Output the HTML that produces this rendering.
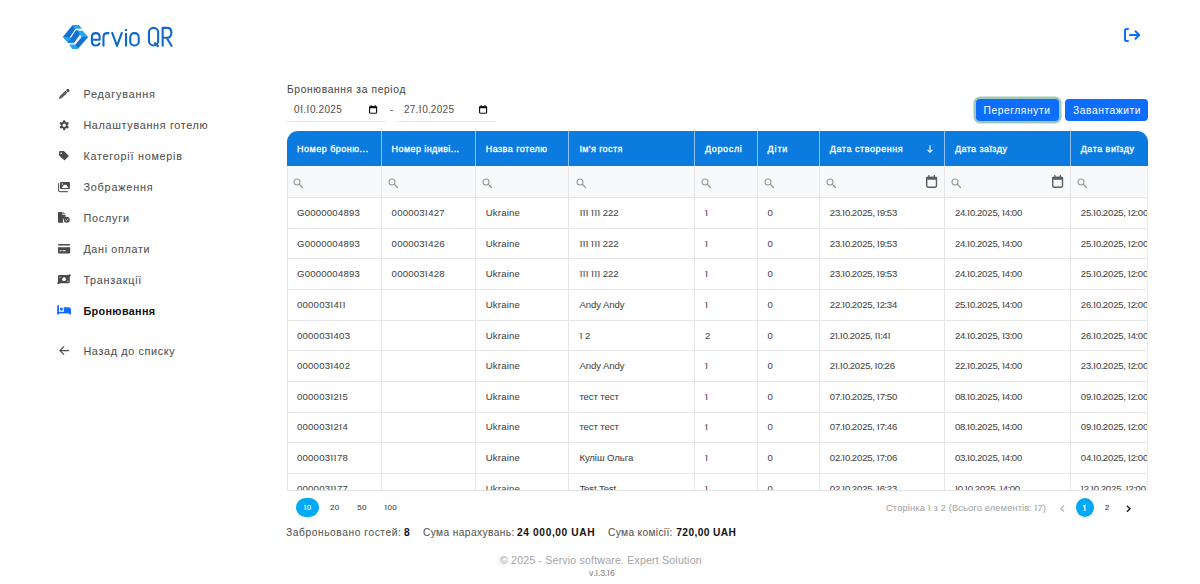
<!DOCTYPE html>
<html><head><meta charset="utf-8">
<style>
*{box-sizing:border-box;margin:0;padding:0}
html,body{width:1200px;height:584px;overflow:hidden;background:#fff;font-family:"Liberation Sans",sans-serif;}
i{font-style:normal}
.o{position:relative;margin:0 0.025em}
.o:before{content:'\00B4';position:absolute;font-size:0.75em;line-height:1;left:-0.1em;top:0.3em;-webkit-text-stroke:0}
.a{position:absolute;white-space:nowrap;line-height:1;-webkit-text-stroke:0.08px currentColor}
.a[style*="bold"]{-webkit-text-stroke:0}
.menu{color:#505050;letter-spacing:0.7px}
.act{color:#111;font-weight:bold;letter-spacing:0.55px}
.ic{position:absolute;overflow:visible}
.lbl{color:#555;letter-spacing:0.8px}
.btn{position:absolute;background:#0d6efd;border-radius:4px}
#tbl{position:absolute;left:286.5px;top:131px;width:861px;height:360px;overflow:hidden;border-radius:11px 11px 0 0}
.hd{position:absolute;left:0;top:0;height:35.2px;width:100%;background:#0c7be0}
.th{color:#fff;font-weight:bold;letter-spacing:0.05px}
.fr{position:absolute;left:0;top:35.2px;height:31.3px;width:100%;background:#f8f9fa}
.hl{position:absolute;left:0;width:100%;height:1px;background:#e6e6e6}
.vl{position:absolute;width:1px;background:#e6e6e6}
.vh{position:absolute;width:1px;top:0;height:35.2px;background:#8fc0f0}
.td{color:#444;letter-spacing:0.2px;-webkit-text-stroke:0.05px currentColor}
</style></head>
<body>
<svg class="ic" style="left:60px;top:22px" width="32" height="30" viewBox="0 0 623 584">
  <polygon fill="#21a7f4" points="245,58 370,58 430,132 300,132"/>
  <polygon fill="#1570d6" points="245,58 300,132 195,292 55,292"/>
  <polygon fill="#21a7f4" points="55,292 195,292 275,402 150,402"/>
  <polygon fill="#1570d6" points="150,402 275,402 430,190 310,155"/>
  <polygon fill="#21a7f4" points="340,168 440,168 550,292 420,292"/>
  <polygon fill="#1570d6" points="420,292 550,292 350,520 235,520"/>
  <polygon fill="#21a7f4" points="180,440 300,440 350,520 235,520"/>
</svg>
<svg class="ic" style="left:85px;top:22px" width="95" height="30" viewBox="85 22 95 30"><g fill="none" stroke="#1267cc" stroke-width="2.1" stroke-linecap="butt" stroke-linejoin="round"><path d="M92 39.7 H99.65 V36.9 Q99.65 33.15 95.8 33.15 Q91.95 33.15 91.95 36.9 V41.7 Q91.95 45.45 95.8 45.45 Q99.2 45.45 99.65 42.6"/><path d="M103.45 46.5 V37 Q103.45 33.15 107.3 33.15 H109.3"/><path d="M111.9 32.1 L117 45.8 L122.1 32.1"/><path d="M126 33 V46.5 M126 29 V31"/><rect x="130.25" y="33.15" width="8.5" height="12.3" rx="4"/><rect x="148.95" y="27.85" width="9.2" height="17.6" rx="4.5"/><path d="M154.3 42.4 L158.6 46.7"/><path d="M162.65 46.5 V27.85 H167.3 Q171.35 27.85 171.35 32.7 Q171.35 37.7 167 37.7 H162.65 M166.6 37.7 L172 46.5"/></g></svg>
<svg class="ic" style="left:1122px;top:26px" width="20" height="18" viewBox="0 0 20 18">
 <g fill="none" stroke="#0d6efd" stroke-width="2" stroke-linecap="round" stroke-linejoin="round">
  <path d="M6 3H4.5A1.5 1.5 0 0 0 3 4.5v9A1.5 1.5 0 0 0 4.5 15H6"/>
  <path d="M8 9h9M13.5 5.3L17.2 9l-3.7 3.7"/>
 </g>
</svg>
<div class="a " style="left:83.40px;top:88.56px;font-size:10.8px;color:#505050;letter-spacing:0.785px;">Редагування</div>
<div class="a " style="left:83.40px;top:119.56px;font-size:10.8px;color:#505050;letter-spacing:0.684px;">Налаштування готелю</div>
<div class="a " style="left:83.40px;top:150.56px;font-size:10.8px;color:#505050;letter-spacing:0.753px;">Категорії номерів</div>
<div class="a " style="left:83.40px;top:181.56px;font-size:10.8px;color:#505050;letter-spacing:0.840px;">Зображення</div>
<div class="a " style="left:83.40px;top:212.56px;font-size:10.8px;color:#505050;letter-spacing:0.793px;">Послуги</div>
<div class="a " style="left:83.40px;top:243.56px;font-size:10.8px;color:#505050;letter-spacing:0.661px;">Дані оплати</div>
<div class="a " style="left:83.40px;top:274.56px;font-size:10.8px;color:#505050;letter-spacing:0.740px;">Транзакції</div>
<div class="a " style="left:83.40px;top:305.56px;font-size:10.8px;color:#111;letter-spacing:0.361px;font-weight:bold;">Бронювання</div>
<div class="a " style="left:83.40px;top:345.56px;font-size:10.8px;color:#505050;letter-spacing:0.658px;">Назад до списку</div>
<svg class="ic" style="left:55px;top:85px" width="18" height="18" viewBox="0 0 18 18"><g transform="rotate(-43 8.8 9.25)"><polygon points="1.9,9.25 4.5,7.9 4.5,10.6" fill="#4a4a4a"/><rect x="4.4" y="7.9" width="8" height="2.7" fill="#4a4a4a"/><rect x="4.9" y="8.95" width="7" height="0.6" fill="#fff" opacity="0.35"/><rect x="12.95" y="7.7" width="2.9" height="3.1" rx="1.2" fill="#4a4a4a"/><circle cx="3.4" cy="9.25" r="0.45" fill="#fff" opacity="0.6"/></g></svg>
<svg class="ic" style="left:58.7px;top:119.5px" width="10.4" height="10.4" viewBox="0 0 24 24"><g fill="#4a4a4a"><rect x="9" y="0.5" width="6" height="23" rx="3" transform="rotate(0 12 12)"/><rect x="9" y="0.5" width="6" height="23" rx="3" transform="rotate(60 12 12)"/><rect x="9" y="0.5" width="6" height="23" rx="3" transform="rotate(120 12 12)"/><polygon points="12,3.5 19.4,7.75 19.4,16.25 12,20.5 4.6,16.25 4.6,7.75"/></g><circle cx="12" cy="12" r="3.9" fill="#fff"/></svg>
<svg class="ic" style="left:58.8px;top:150.8px" width="10" height="9.4" viewBox="0 0 20 19"><path fill="#4a4a4a" fill-rule="evenodd" d="M0 2 Q0 0 2 0 H9 Q10 0 11 1 L19 9 Q20 10 19 11 L12 18 Q11 19 10 18 L1 10 Q0 9 0 8 Z M4.2 2.8 a1.5 1.5 0 1 0 0.01 0z"/></svg>
<svg class="ic" style="left:55px;top:178px" width="18" height="18" viewBox="0 0 18 18"><rect x="5" y="4" width="9.9" height="7" rx="1.1" fill="#4a4a4a"/><path d="M6.6 10 L9.2 6.6 L10.2 7.5 L10.8 6.3 L13.6 10 Z" fill="#fff"/><circle cx="7.4" cy="6.1" r="0.75" fill="#fff"/><path d="M3.6 5.3 V12.2 Q3.6 13.6 5 13.6 H12.9" fill="none" stroke="#4a4a4a" stroke-width="1.2" opacity="0.85"/></svg>
<svg class="ic" style="left:57.8px;top:212px" width="12.5" height="11" viewBox="0 0 25 22"><path fill="#4a4a4a" d="M0 1.5 Q0 0 1.5 0 H9 L9 6 H15 V11 A6.5 6.5 0 0 0 11 21.5 H1.5 Q0 21.5 0 20 Z M10.5 0 L15 4.5 H10.5 Z"/><circle cx="17.5" cy="15.5" r="6" fill="#4a4a4a"/><path d="M14.6 15.5 L16.8 17.6 L20.5 13.6" fill="none" stroke="#fff" stroke-width="1.5"/></svg>
<svg class="ic" style="left:57.8px;top:243.8px" width="12.2" height="9.4" viewBox="0 0 24 18.5"><rect x="0" y="0" width="24" height="3.2" rx="1.5" fill="#4a4a4a"/><path fill="#4a4a4a" fill-rule="evenodd" d="M0 6.5 H24 V16.5 Q24 18.5 22 18.5 H2 Q0 18.5 0 16.5 Z M3 12.5 h4 v2 h-4z M9 12.5 h6 v2 h-6z"/></svg>
<svg class="ic" style="left:55px;top:270px" width="18" height="18" viewBox="0 0 18 18"><rect x="3" y="5" width="11.8" height="8.3" rx="1.3" fill="#4a4a4a"/><circle cx="9" cy="9.2" r="1.9" fill="#fff"/><circle cx="5" cy="7.3" r="0.75" fill="#fff" opacity="0.7"/><circle cx="12.9" cy="11.2" r="0.75" fill="#fff" opacity="0.7"/><circle cx="14.4" cy="5.4" r="1.2" fill="#4a4a4a"/><circle cx="3.5" cy="13" r="1.2" fill="#4a4a4a"/></svg>
<svg class="ic" style="left:55px;top:301px" width="18" height="18" viewBox="0 0 18 18"><g fill="#1769ff"><rect x="2.2" y="4.3" width="1.8" height="9.3" rx="0.5"/><circle cx="6.4" cy="8.1" r="1.55"/><path d="M8.8 6.2 H13.6 Q16 6.2 16 8.6 V11 H8.8 Z"/><rect x="2.2" y="10.8" width="13.8" height="1.6"/><rect x="14.2" y="10.8" width="1.8" height="2.8" rx="0.5"/></g></svg>
<svg class="ic" style="left:58.5px;top:346.3px" width="10.5" height="9.2" viewBox="0 0 21 18.4"><g fill="none" stroke="#4a4a4a" stroke-width="2.3" stroke-linecap="round" stroke-linejoin="round"><path d="M9.5 1.5 L2 9.2 L9.5 16.9"/><path d="M2.5 9.2 H19"/></g></svg>
<div class="a " style="left:287.00px;top:85.17px;font-size:10.2px;color:#4a4a4a;letter-spacing:0.677px;">Бронювання за період</div>
<div class="btn" style="left:976px;top:99px;width:82.5px;height:22px;box-shadow:0 0 0 2.5px #9fc9b6"></div>
<div class="btn" style="left:1065px;top:99px;width:83px;height:22px"></div>
<div class="a " style="left:983.50px;top:105.87px;font-size:10.2px;color:#fff;letter-spacing:0.6px;-webkit-text-stroke:0">Переглянути</div>
<div class="a " style="left:1073.00px;top:105.87px;font-size:10.2px;color:#fff;letter-spacing:0.6px;-webkit-text-stroke:0">Завантажити</div>
<div class="a " style="left:294.00px;top:105.03px;font-size:10px;color:#555;letter-spacing:0.3px">0<i class="o">I</i><i style="margin:0 -0.15px">.</i><i class="o">I</i>0<i style="margin:0 -0.15px">.</i>2025</div>
<svg class="ic" style="left:368.8px;top:104.9px" width="8.2" height="8.8" viewBox="0 0 8.2 8.8"><rect x="1.64" y="0" width="0.90" height="1.94" fill="#111"/><rect x="5.66" y="0" width="0.90" height="1.94" fill="#111"/><rect x="0.57" y="1.81" width="7.05" height="6.42" rx="1.07" fill="none" stroke="#111" stroke-width="1.15"/><rect x="0" y="1.23" width="8.20" height="2.00" rx="0.82" fill="#111"/></svg>
<div style="position:absolute;left:286px;top:120.5px;width:100px;height:1.2px;background:#e5e5e5"></div>
<div class="a " style="left:390.00px;top:105.03px;font-size:10px;color:#555">-</div>
<div class="a " style="left:404.00px;top:105.03px;font-size:10px;color:#555;letter-spacing:0.3px">27<i style="margin:0 -0.15px">.</i><i class="o">I</i>0<i style="margin:0 -0.15px">.</i>2025</div>
<svg class="ic" style="left:479.2px;top:104.9px" width="8.2" height="8.8" viewBox="0 0 8.2 8.8"><rect x="1.64" y="0" width="0.90" height="1.94" fill="#111"/><rect x="5.66" y="0" width="0.90" height="1.94" fill="#111"/><rect x="0.57" y="1.81" width="7.05" height="6.42" rx="1.07" fill="none" stroke="#111" stroke-width="1.15"/><rect x="0" y="1.23" width="8.20" height="2.00" rx="0.82" fill="#111"/></svg>
<div style="position:absolute;left:396.5px;top:120.5px;width:99.5px;height:1.2px;background:#e5e5e5"></div>
<div style="position:absolute;left:295.8px;top:498px;width:23.2px;height:19px;border-radius:10px;background:#03a9f4"></div>
<div class="a " style="left:303.90px;top:503.53px;font-size:8px;color:#fff;letter-spacing:0.2px"><i class="o">I</i>0</div>
<div class="a " style="left:330.00px;top:503.53px;font-size:8px;color:#444;letter-spacing:0.3px">20</div>
<div class="a " style="left:357.30px;top:503.53px;font-size:8px;color:#444;letter-spacing:0.3px">50</div>
<div class="a " style="left:384.60px;top:503.53px;font-size:8px;color:#444;letter-spacing:0.3px"><i class="o">I</i>00</div>
<div class="a " style="left:886.00px;top:502.54px;font-size:9.4px;color:#a8a8a8;letter-spacing:0.1px">Сторінка <i class="o">I</i> з 2 (Всього елементів<i style="margin:0 -0.3px">:</i> <i class="o">I</i>7)</div>
<svg class="ic" style="left:1060px;top:504.5px" width="5" height="7" viewBox="0 0 5 7"><path d="M4 0.5 L0.9 3.5 L4 6.5" fill="none" stroke="#b0b0b0" stroke-width="1.1"/></svg>
<div style="position:absolute;left:1075.8px;top:498px;width:18px;height:19px;border-radius:50%;background:#03a9f4"></div>
<svg class="ic" style="left:1082px;top:504.5px" width="5" height="6" viewBox="0 0 5 6"><path d="M1 1.3 L2.9 0.4 V6" fill="none" stroke="#fff" stroke-width="1.2"/></svg>
<div class="a " style="left:1105.00px;top:503.97px;font-size:7.6px;color:#333">2</div>
<svg class="ic" style="left:1125.5px;top:504.5px" width="5" height="7.5" viewBox="0 0 5 7.5"><path d="M0.9 0.7 L4 3.75 L0.9 6.8" fill="none" stroke="#222" stroke-width="1.5"/></svg>
<div class="a " style="left:286.00px;top:528.07px;font-size:10.2px;color:#555;letter-spacing:0.590px;">Заброньовано гостей:</div>
<div class="a " style="left:404.00px;top:528.07px;font-size:10.2px;color:#111;letter-spacing:-0.173px;font-weight:bold;">8</div>
<div class="a " style="left:422.90px;top:528.07px;font-size:10.2px;color:#555;letter-spacing:0.401px;">Сума нарахувань:</div>
<div class="a " style="left:517.10px;top:528.07px;font-size:10.2px;color:#111;letter-spacing:0.608px;font-weight:bold;">24 000,00 UAH</div>
<div class="a " style="left:608.10px;top:528.07px;font-size:10.2px;color:#555;letter-spacing:0.331px;">Сума комісії:</div>
<div class="a " style="left:676.30px;top:528.07px;font-size:10.2px;color:#111;letter-spacing:0.397px;font-weight:bold;">720,00 UAH</div>
<div class="a " style="left:500.00px;top:554.63px;font-size:10.6px;color:#a9a9a9;letter-spacing:0.178px;">© 2025 - Servio software. Expert Solution</div>
<div class="a " style="left:589.00px;top:568.95px;font-size:8.8px;color:#888;letter-spacing:0px">v<i style="margin:0 -0.25px">.</i><i class="o">I</i><i style="margin:0 -0.25px">.</i>3<i style="margin:0 -0.25px">.</i><i class="o">I</i>6</div>
<div id="tbl">
<div class="hd"></div><div class="fr"></div>
<div class="a " style="left:10.50px;top:13.68px;font-size:9.0px;color:#fff;letter-spacing:0.493px;-webkit-text-stroke:0.3px #fff;">Номер броню...</div>
<div class="a " style="left:105.10px;top:13.68px;font-size:9.0px;color:#fff;letter-spacing:0.412px;-webkit-text-stroke:0.3px #fff;">Номер індиві...</div>
<div class="vh" style="left:94.10px"></div>
<div class="a " style="left:199.20px;top:13.68px;font-size:9.0px;color:#fff;letter-spacing:0.460px;-webkit-text-stroke:0.3px #fff;">Назва готелю</div>
<div class="vh" style="left:188.20px"></div>
<div class="a " style="left:292.90px;top:13.68px;font-size:9.0px;color:#fff;letter-spacing:0.393px;-webkit-text-stroke:0.3px #fff;">Ім&#x27;я гостя</div>
<div class="vh" style="left:281.90px"></div>
<div class="a " style="left:418.40px;top:13.68px;font-size:9.0px;color:#fff;letter-spacing:0.656px;-webkit-text-stroke:0.3px #fff;">Дорослі</div>
<div class="vh" style="left:407.40px"></div>
<div class="a " style="left:481.10px;top:13.68px;font-size:9.0px;color:#fff;letter-spacing:0.852px;-webkit-text-stroke:0.3px #fff;">Діти</div>
<div class="vh" style="left:470.10px"></div>
<div class="a " style="left:543.30px;top:13.68px;font-size:9.0px;color:#fff;letter-spacing:0.564px;-webkit-text-stroke:0.3px #fff;">Дата створення</div>
<div class="vh" style="left:532.30px"></div>
<div class="a " style="left:668.40px;top:13.68px;font-size:9.0px;color:#fff;letter-spacing:0.426px;-webkit-text-stroke:0.3px #fff;">Дата заїзду</div>
<div class="vh" style="left:657.40px"></div>
<div class="a " style="left:794.30px;top:13.68px;font-size:9.0px;color:#fff;letter-spacing:0.478px;-webkit-text-stroke:0.3px #fff;">Дата виїзду</div>
<div class="vh" style="left:783.30px"></div>
<div class="vl" style="left:0.00px;top:35.5px;height:330px"></div>
<div class="vl" style="left:94.10px;top:35.5px;height:330px"></div>
<div class="vl" style="left:188.20px;top:35.5px;height:330px"></div>
<div class="vl" style="left:281.90px;top:35.5px;height:330px"></div>
<div class="vl" style="left:407.40px;top:35.5px;height:330px"></div>
<div class="vl" style="left:470.10px;top:35.5px;height:330px"></div>
<div class="vl" style="left:532.30px;top:35.5px;height:330px"></div>
<div class="vl" style="left:657.40px;top:35.5px;height:330px"></div>
<div class="vl" style="left:783.30px;top:35.5px;height:330px"></div>
<div class="hl" style="top:66px"></div>
<svg class="ic" style="left:6.60px;top:47.20px" width="10.5" height="10.5" viewBox="0 0 21 21"><circle cx="8" cy="8" r="6" fill="none" stroke="#9a9a9a" stroke-width="2.2"/><path d="M12.5 12.5 L19 19" stroke="#9a9a9a" stroke-width="2.4" stroke-linecap="round"/></svg>
<svg class="ic" style="left:101.20px;top:47.20px" width="10.5" height="10.5" viewBox="0 0 21 21"><circle cx="8" cy="8" r="6" fill="none" stroke="#9a9a9a" stroke-width="2.2"/><path d="M12.5 12.5 L19 19" stroke="#9a9a9a" stroke-width="2.4" stroke-linecap="round"/></svg>
<svg class="ic" style="left:195.30px;top:47.20px" width="10.5" height="10.5" viewBox="0 0 21 21"><circle cx="8" cy="8" r="6" fill="none" stroke="#9a9a9a" stroke-width="2.2"/><path d="M12.5 12.5 L19 19" stroke="#9a9a9a" stroke-width="2.4" stroke-linecap="round"/></svg>
<svg class="ic" style="left:289.00px;top:47.20px" width="10.5" height="10.5" viewBox="0 0 21 21"><circle cx="8" cy="8" r="6" fill="none" stroke="#9a9a9a" stroke-width="2.2"/><path d="M12.5 12.5 L19 19" stroke="#9a9a9a" stroke-width="2.4" stroke-linecap="round"/></svg>
<svg class="ic" style="left:414.50px;top:47.20px" width="10.5" height="10.5" viewBox="0 0 21 21"><circle cx="8" cy="8" r="6" fill="none" stroke="#9a9a9a" stroke-width="2.2"/><path d="M12.5 12.5 L19 19" stroke="#9a9a9a" stroke-width="2.4" stroke-linecap="round"/></svg>
<svg class="ic" style="left:477.20px;top:47.20px" width="10.5" height="10.5" viewBox="0 0 21 21"><circle cx="8" cy="8" r="6" fill="none" stroke="#9a9a9a" stroke-width="2.2"/><path d="M12.5 12.5 L19 19" stroke="#9a9a9a" stroke-width="2.4" stroke-linecap="round"/></svg>
<svg class="ic" style="left:539.40px;top:47.20px" width="10.5" height="10.5" viewBox="0 0 21 21"><circle cx="8" cy="8" r="6" fill="none" stroke="#9a9a9a" stroke-width="2.2"/><path d="M12.5 12.5 L19 19" stroke="#9a9a9a" stroke-width="2.4" stroke-linecap="round"/></svg>
<svg class="ic" style="left:664.50px;top:47.20px" width="10.5" height="10.5" viewBox="0 0 21 21"><circle cx="8" cy="8" r="6" fill="none" stroke="#9a9a9a" stroke-width="2.2"/><path d="M12.5 12.5 L19 19" stroke="#9a9a9a" stroke-width="2.4" stroke-linecap="round"/></svg>
<svg class="ic" style="left:790.40px;top:47.20px" width="10.5" height="10.5" viewBox="0 0 21 21"><circle cx="8" cy="8" r="6" fill="none" stroke="#9a9a9a" stroke-width="2.2"/><path d="M12.5 12.5 L19 19" stroke="#9a9a9a" stroke-width="2.4" stroke-linecap="round"/></svg>
<svg class="ic" style="left:639.6999999999999px;top:43.900000000000006px" width="11.2" height="12.9" viewBox="0 0 11.2 12.9"><rect x="2.24" y="0" width="1.23" height="2.84" fill="#5c5c5c"/><rect x="7.73" y="0" width="1.23" height="2.84" fill="#5c5c5c"/><rect x="0.70" y="2.51" width="9.80" height="9.69" rx="1.46" fill="none" stroke="#5c5c5c" stroke-width="1.4"/><rect x="0" y="1.81" width="11.20" height="3.00" rx="1.12" fill="#5c5c5c"/></svg>
<svg class="ic" style="left:765.5999999999999px;top:43.900000000000006px" width="11.2" height="12.9" viewBox="0 0 11.2 12.9"><rect x="2.24" y="0" width="1.23" height="2.84" fill="#5c5c5c"/><rect x="7.73" y="0" width="1.23" height="2.84" fill="#5c5c5c"/><rect x="0.70" y="2.51" width="9.80" height="9.69" rx="1.46" fill="none" stroke="#5c5c5c" stroke-width="1.4"/><rect x="0" y="1.81" width="11.20" height="3.00" rx="1.12" fill="#5c5c5c"/></svg>
<svg class="ic" style="left:640.30px;top:13.60px" width="6" height="8" viewBox="0 0 6 8"><path d="M3 0.3 V7.2 M0.6 4.8 L3 7.3 L5.4 4.8" fill="none" stroke="#fff" stroke-width="1.1"/></svg>
<div class="hl" style="top:96.66px"></div>
<div class="a td" style="left:10.50px;top:76.87px;font-size:9.6px;">G0000004893</div>
<div class="a td" style="left:105.10px;top:76.87px;font-size:9.6px;">000003<i class="o">I</i>427</div>
<div class="a td" style="left:199.20px;top:76.87px;font-size:9.6px;">Ukraine</div>
<div class="a td" style="left:292.90px;top:76.87px;font-size:9.6px;letter-spacing:-0.1px"><i class="o">I</i><i class="o">I</i><i class="o">I</i> <i class="o">I</i><i class="o">I</i><i class="o">I</i> 222</div>
<div class="a td" style="left:418.40px;top:76.87px;font-size:9.6px;"><i class="o">I</i></div>
<div class="a td" style="left:481.10px;top:76.87px;font-size:9.6px;">0</div>
<div class="a td" style="left:543.30px;top:76.87px;font-size:9.6px;letter-spacing:-0.18px">23<i style="margin:0 -0.35px">.</i><i class="o">I</i>0<i style="margin:0 -0.35px">.</i>2025<i style="margin:0 -0.35px">,</i> <i class="o">I</i>9<i style="margin:0 -0.35px">:</i>53</div>
<div class="a td" style="left:668.40px;top:76.87px;font-size:9.6px;letter-spacing:-0.18px">24<i style="margin:0 -0.35px">.</i><i class="o">I</i>0<i style="margin:0 -0.35px">.</i>2025<i style="margin:0 -0.35px">,</i> <i class="o">I</i>4<i style="margin:0 -0.35px">:</i>00</div>
<div class="a td" style="left:794.30px;top:76.87px;font-size:9.6px;letter-spacing:-0.18px">25<i style="margin:0 -0.35px">.</i><i class="o">I</i>0<i style="margin:0 -0.35px">.</i>2025<i style="margin:0 -0.35px">,</i> <i class="o">I</i>2<i style="margin:0 -0.35px">:</i>00</div>
<div class="hl" style="top:127.32px"></div>
<div class="a td" style="left:10.50px;top:107.53px;font-size:9.6px;">G0000004893</div>
<div class="a td" style="left:105.10px;top:107.53px;font-size:9.6px;">000003<i class="o">I</i>426</div>
<div class="a td" style="left:199.20px;top:107.53px;font-size:9.6px;">Ukraine</div>
<div class="a td" style="left:292.90px;top:107.53px;font-size:9.6px;letter-spacing:-0.1px"><i class="o">I</i><i class="o">I</i><i class="o">I</i> <i class="o">I</i><i class="o">I</i><i class="o">I</i> 222</div>
<div class="a td" style="left:418.40px;top:107.53px;font-size:9.6px;"><i class="o">I</i></div>
<div class="a td" style="left:481.10px;top:107.53px;font-size:9.6px;">0</div>
<div class="a td" style="left:543.30px;top:107.53px;font-size:9.6px;letter-spacing:-0.18px">23<i style="margin:0 -0.35px">.</i><i class="o">I</i>0<i style="margin:0 -0.35px">.</i>2025<i style="margin:0 -0.35px">,</i> <i class="o">I</i>9<i style="margin:0 -0.35px">:</i>53</div>
<div class="a td" style="left:668.40px;top:107.53px;font-size:9.6px;letter-spacing:-0.18px">24<i style="margin:0 -0.35px">.</i><i class="o">I</i>0<i style="margin:0 -0.35px">.</i>2025<i style="margin:0 -0.35px">,</i> <i class="o">I</i>4<i style="margin:0 -0.35px">:</i>00</div>
<div class="a td" style="left:794.30px;top:107.53px;font-size:9.6px;letter-spacing:-0.18px">25<i style="margin:0 -0.35px">.</i><i class="o">I</i>0<i style="margin:0 -0.35px">.</i>2025<i style="margin:0 -0.35px">,</i> <i class="o">I</i>2<i style="margin:0 -0.35px">:</i>00</div>
<div class="hl" style="top:157.98px"></div>
<div class="a td" style="left:10.50px;top:138.19px;font-size:9.6px;">G0000004893</div>
<div class="a td" style="left:105.10px;top:138.19px;font-size:9.6px;">000003<i class="o">I</i>428</div>
<div class="a td" style="left:199.20px;top:138.19px;font-size:9.6px;">Ukraine</div>
<div class="a td" style="left:292.90px;top:138.19px;font-size:9.6px;letter-spacing:-0.1px"><i class="o">I</i><i class="o">I</i><i class="o">I</i> <i class="o">I</i><i class="o">I</i><i class="o">I</i> 222</div>
<div class="a td" style="left:418.40px;top:138.19px;font-size:9.6px;"><i class="o">I</i></div>
<div class="a td" style="left:481.10px;top:138.19px;font-size:9.6px;">0</div>
<div class="a td" style="left:543.30px;top:138.19px;font-size:9.6px;letter-spacing:-0.18px">23<i style="margin:0 -0.35px">.</i><i class="o">I</i>0<i style="margin:0 -0.35px">.</i>2025<i style="margin:0 -0.35px">,</i> <i class="o">I</i>9<i style="margin:0 -0.35px">:</i>53</div>
<div class="a td" style="left:668.40px;top:138.19px;font-size:9.6px;letter-spacing:-0.18px">24<i style="margin:0 -0.35px">.</i><i class="o">I</i>0<i style="margin:0 -0.35px">.</i>2025<i style="margin:0 -0.35px">,</i> <i class="o">I</i>4<i style="margin:0 -0.35px">:</i>00</div>
<div class="a td" style="left:794.30px;top:138.19px;font-size:9.6px;letter-spacing:-0.18px">25<i style="margin:0 -0.35px">.</i><i class="o">I</i>0<i style="margin:0 -0.35px">.</i>2025<i style="margin:0 -0.35px">,</i> <i class="o">I</i>2<i style="margin:0 -0.35px">:</i>00</div>
<div class="hl" style="top:188.64px"></div>
<div class="a td" style="left:10.50px;top:168.85px;font-size:9.6px;">000003<i class="o">I</i>4<i class="o">I</i><i class="o">I</i></div>
<div class="a td" style="left:199.20px;top:168.85px;font-size:9.6px;">Ukraine</div>
<div class="a td" style="left:292.90px;top:168.85px;font-size:9.6px;letter-spacing:-0.1px">Andy Andy</div>
<div class="a td" style="left:418.40px;top:168.85px;font-size:9.6px;"><i class="o">I</i></div>
<div class="a td" style="left:481.10px;top:168.85px;font-size:9.6px;">0</div>
<div class="a td" style="left:543.30px;top:168.85px;font-size:9.6px;letter-spacing:-0.18px">22<i style="margin:0 -0.35px">.</i><i class="o">I</i>0<i style="margin:0 -0.35px">.</i>2025<i style="margin:0 -0.35px">,</i> <i class="o">I</i>2<i style="margin:0 -0.35px">:</i>34</div>
<div class="a td" style="left:668.40px;top:168.85px;font-size:9.6px;letter-spacing:-0.18px">25<i style="margin:0 -0.35px">.</i><i class="o">I</i>0<i style="margin:0 -0.35px">.</i>2025<i style="margin:0 -0.35px">,</i> <i class="o">I</i>4<i style="margin:0 -0.35px">:</i>00</div>
<div class="a td" style="left:794.30px;top:168.85px;font-size:9.6px;letter-spacing:-0.18px">26<i style="margin:0 -0.35px">.</i><i class="o">I</i>0<i style="margin:0 -0.35px">.</i>2025<i style="margin:0 -0.35px">,</i> <i class="o">I</i>2<i style="margin:0 -0.35px">:</i>00</div>
<div class="hl" style="top:219.30px"></div>
<div class="a td" style="left:10.50px;top:199.51px;font-size:9.6px;">000003<i class="o">I</i>403</div>
<div class="a td" style="left:199.20px;top:199.51px;font-size:9.6px;">Ukraine</div>
<div class="a td" style="left:292.90px;top:199.51px;font-size:9.6px;letter-spacing:-0.1px"><i class="o">I</i> 2</div>
<div class="a td" style="left:418.40px;top:199.51px;font-size:9.6px;">2</div>
<div class="a td" style="left:481.10px;top:199.51px;font-size:9.6px;">0</div>
<div class="a td" style="left:543.30px;top:199.51px;font-size:9.6px;letter-spacing:-0.18px">2<i class="o">I</i><i style="margin:0 -0.35px">.</i><i class="o">I</i>0<i style="margin:0 -0.35px">.</i>2025<i style="margin:0 -0.35px">,</i> <i class="o">I</i><i class="o">I</i><i style="margin:0 -0.35px">:</i>4<i class="o">I</i></div>
<div class="a td" style="left:668.40px;top:199.51px;font-size:9.6px;letter-spacing:-0.18px">24<i style="margin:0 -0.35px">.</i><i class="o">I</i>0<i style="margin:0 -0.35px">.</i>2025<i style="margin:0 -0.35px">,</i> <i class="o">I</i>3<i style="margin:0 -0.35px">:</i>00</div>
<div class="a td" style="left:794.30px;top:199.51px;font-size:9.6px;letter-spacing:-0.18px">26<i style="margin:0 -0.35px">.</i><i class="o">I</i>0<i style="margin:0 -0.35px">.</i>2025<i style="margin:0 -0.35px">,</i> <i class="o">I</i>4<i style="margin:0 -0.35px">:</i>00</div>
<div class="hl" style="top:249.96px"></div>
<div class="a td" style="left:10.50px;top:230.17px;font-size:9.6px;">000003<i class="o">I</i>402</div>
<div class="a td" style="left:199.20px;top:230.17px;font-size:9.6px;">Ukraine</div>
<div class="a td" style="left:292.90px;top:230.17px;font-size:9.6px;letter-spacing:-0.1px">Andy Andy</div>
<div class="a td" style="left:418.40px;top:230.17px;font-size:9.6px;"><i class="o">I</i></div>
<div class="a td" style="left:481.10px;top:230.17px;font-size:9.6px;">0</div>
<div class="a td" style="left:543.30px;top:230.17px;font-size:9.6px;letter-spacing:-0.18px">2<i class="o">I</i><i style="margin:0 -0.35px">.</i><i class="o">I</i>0<i style="margin:0 -0.35px">.</i>2025<i style="margin:0 -0.35px">,</i> <i class="o">I</i>0<i style="margin:0 -0.35px">:</i>26</div>
<div class="a td" style="left:668.40px;top:230.17px;font-size:9.6px;letter-spacing:-0.18px">22<i style="margin:0 -0.35px">.</i><i class="o">I</i>0<i style="margin:0 -0.35px">.</i>2025<i style="margin:0 -0.35px">,</i> <i class="o">I</i>4<i style="margin:0 -0.35px">:</i>00</div>
<div class="a td" style="left:794.30px;top:230.17px;font-size:9.6px;letter-spacing:-0.18px">23<i style="margin:0 -0.35px">.</i><i class="o">I</i>0<i style="margin:0 -0.35px">.</i>2025<i style="margin:0 -0.35px">,</i> <i class="o">I</i>2<i style="margin:0 -0.35px">:</i>00</div>
<div class="hl" style="top:280.62px"></div>
<div class="a td" style="left:10.50px;top:260.83px;font-size:9.6px;">000003<i class="o">I</i>2<i class="o">I</i>5</div>
<div class="a td" style="left:199.20px;top:260.83px;font-size:9.6px;">Ukraine</div>
<div class="a td" style="left:292.90px;top:260.83px;font-size:9.6px;letter-spacing:-0.1px">тест тест</div>
<div class="a td" style="left:418.40px;top:260.83px;font-size:9.6px;"><i class="o">I</i></div>
<div class="a td" style="left:481.10px;top:260.83px;font-size:9.6px;">0</div>
<div class="a td" style="left:543.30px;top:260.83px;font-size:9.6px;letter-spacing:-0.18px">07<i style="margin:0 -0.35px">.</i><i class="o">I</i>0<i style="margin:0 -0.35px">.</i>2025<i style="margin:0 -0.35px">,</i> <i class="o">I</i>7<i style="margin:0 -0.35px">:</i>50</div>
<div class="a td" style="left:668.40px;top:260.83px;font-size:9.6px;letter-spacing:-0.18px">08<i style="margin:0 -0.35px">.</i><i class="o">I</i>0<i style="margin:0 -0.35px">.</i>2025<i style="margin:0 -0.35px">,</i> <i class="o">I</i>4<i style="margin:0 -0.35px">:</i>00</div>
<div class="a td" style="left:794.30px;top:260.83px;font-size:9.6px;letter-spacing:-0.18px">09<i style="margin:0 -0.35px">.</i><i class="o">I</i>0<i style="margin:0 -0.35px">.</i>2025<i style="margin:0 -0.35px">,</i> <i class="o">I</i>2<i style="margin:0 -0.35px">:</i>00</div>
<div class="hl" style="top:311.28px"></div>
<div class="a td" style="left:10.50px;top:291.49px;font-size:9.6px;">000003<i class="o">I</i>2<i class="o">I</i>4</div>
<div class="a td" style="left:199.20px;top:291.49px;font-size:9.6px;">Ukraine</div>
<div class="a td" style="left:292.90px;top:291.49px;font-size:9.6px;letter-spacing:-0.1px">тест тест</div>
<div class="a td" style="left:418.40px;top:291.49px;font-size:9.6px;"><i class="o">I</i></div>
<div class="a td" style="left:481.10px;top:291.49px;font-size:9.6px;">0</div>
<div class="a td" style="left:543.30px;top:291.49px;font-size:9.6px;letter-spacing:-0.18px">07<i style="margin:0 -0.35px">.</i><i class="o">I</i>0<i style="margin:0 -0.35px">.</i>2025<i style="margin:0 -0.35px">,</i> <i class="o">I</i>7<i style="margin:0 -0.35px">:</i>46</div>
<div class="a td" style="left:668.40px;top:291.49px;font-size:9.6px;letter-spacing:-0.18px">08<i style="margin:0 -0.35px">.</i><i class="o">I</i>0<i style="margin:0 -0.35px">.</i>2025<i style="margin:0 -0.35px">,</i> <i class="o">I</i>4<i style="margin:0 -0.35px">:</i>00</div>
<div class="a td" style="left:794.30px;top:291.49px;font-size:9.6px;letter-spacing:-0.18px">09<i style="margin:0 -0.35px">.</i><i class="o">I</i>0<i style="margin:0 -0.35px">.</i>2025<i style="margin:0 -0.35px">,</i> <i class="o">I</i>2<i style="margin:0 -0.35px">:</i>00</div>
<div class="hl" style="top:341.94px"></div>
<div class="a td" style="left:10.50px;top:322.15px;font-size:9.6px;">000003<i class="o">I</i><i class="o">I</i>78</div>
<div class="a td" style="left:199.20px;top:322.15px;font-size:9.6px;">Ukraine</div>
<div class="a td" style="left:292.90px;top:322.15px;font-size:9.6px;letter-spacing:-0.1px">Куліш Ольга</div>
<div class="a td" style="left:418.40px;top:322.15px;font-size:9.6px;"><i class="o">I</i></div>
<div class="a td" style="left:481.10px;top:322.15px;font-size:9.6px;">0</div>
<div class="a td" style="left:543.30px;top:322.15px;font-size:9.6px;letter-spacing:-0.18px">02<i style="margin:0 -0.35px">.</i><i class="o">I</i>0<i style="margin:0 -0.35px">.</i>2025<i style="margin:0 -0.35px">,</i> <i class="o">I</i>7<i style="margin:0 -0.35px">:</i>06</div>
<div class="a td" style="left:668.40px;top:322.15px;font-size:9.6px;letter-spacing:-0.18px">03<i style="margin:0 -0.35px">.</i><i class="o">I</i>0<i style="margin:0 -0.35px">.</i>2025<i style="margin:0 -0.35px">,</i> <i class="o">I</i>4<i style="margin:0 -0.35px">:</i>00</div>
<div class="a td" style="left:794.30px;top:322.15px;font-size:9.6px;letter-spacing:-0.18px">04<i style="margin:0 -0.35px">.</i><i class="o">I</i>0<i style="margin:0 -0.35px">.</i>2025<i style="margin:0 -0.35px">,</i> <i class="o">I</i>2<i style="margin:0 -0.35px">:</i>00</div>
<div class="hl" style="top:372.60px"></div>
<div class="a td" style="left:10.50px;top:352.81px;font-size:9.6px;">000003<i class="o">I</i><i class="o">I</i>77</div>
<div class="a td" style="left:199.20px;top:352.81px;font-size:9.6px;">Ukraine</div>
<div class="a td" style="left:292.90px;top:352.81px;font-size:9.6px;letter-spacing:-0.1px">Test Test</div>
<div class="a td" style="left:418.40px;top:352.81px;font-size:9.6px;"><i class="o">I</i></div>
<div class="a td" style="left:481.10px;top:352.81px;font-size:9.6px;">0</div>
<div class="a td" style="left:543.30px;top:352.81px;font-size:9.6px;letter-spacing:-0.18px">02<i style="margin:0 -0.35px">.</i><i class="o">I</i>0<i style="margin:0 -0.35px">.</i>2025<i style="margin:0 -0.35px">,</i> <i class="o">I</i>6<i style="margin:0 -0.35px">:</i>23</div>
<div class="a td" style="left:668.40px;top:352.81px;font-size:9.6px;letter-spacing:-0.18px"><i class="o">I</i>0<i style="margin:0 -0.35px">.</i><i class="o">I</i>0<i style="margin:0 -0.35px">.</i>2025<i style="margin:0 -0.35px">,</i> <i class="o">I</i>4<i style="margin:0 -0.35px">:</i>00</div>
<div class="a td" style="left:794.30px;top:352.81px;font-size:9.6px;letter-spacing:-0.18px"><i class="o">I</i>2<i style="margin:0 -0.35px">.</i><i class="o">I</i>0<i style="margin:0 -0.35px">.</i>2025<i style="margin:0 -0.35px">,</i> <i class="o">I</i>2<i style="margin:0 -0.35px">:</i>00</div>
<div class="hl" style="top:359px;background:#e3e3e3"></div>
<div class="vl" style="left:860px;top:35.5px;height:330px;background:#ececec"></div>
</div>
</body></html>
